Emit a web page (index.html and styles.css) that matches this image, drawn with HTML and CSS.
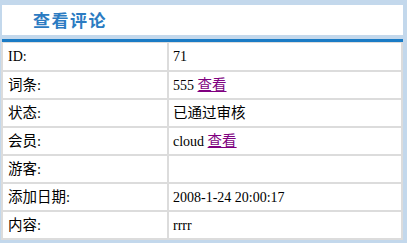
FILE: index.html
```html
<!DOCTYPE html>
<html>
<head>
<meta charset="utf-8">
<link rel="stylesheet" href="styles.css">
</head>
<body>
<div class="wrap">
  <div class="title">查看评论</div>
  <div class="bar"></div>
  <table class="info">
    <tr class="first"><td class="label"><span class="lat">ID:</span></td><td class="val"><span class="lat">71</span></td></tr>
    <tr><td class="label">词条:</td><td class="val"><span class="lat">555 </span><a href="#" class="link">查看</a></td></tr>
    <tr><td class="label">状态:</td><td class="val">已通过审核</td></tr>
    <tr><td class="label">会员:</td><td class="val"><span class="lat">cloud </span><a href="#" class="link">查看</a></td></tr>
    <tr><td class="label">游客:</td><td class="val"></td></tr>
    <tr><td class="label">添加日期:</td><td class="val"><span class="lat">2008-1-24 20:00:17</span></td></tr>
    <tr><td class="label">内容:</td><td class="val"><span class="lat">rrrr</span></td></tr>
  </table>
</div>
</body>
</html>
```
FILE: styles.css
```css
html, body {
  margin: 0;
  padding: 0;
  background: #c3d8ec;
}
.wrap {
  padding: 5px 4px 0 1px;
}
.title {
  margin-left: 1px;
  height: 30px;
  background: #fff;
  padding-left: 31px;
  font-family: "Noto Sans CJK SC", sans-serif;
  font-weight: bold;
  font-size: 17px;
  line-height: 30px;
  color: #2b7bc2;
  letter-spacing: 1.5px;
  margin-bottom: 4px;
}
.bar {
  margin-left: 1px;
  height: 3px;
  background: #1a7bc5;
}
.info {
  width: 402px;
  border-collapse: separate;
  border-spacing: 0;
  background: #fff;
  border-top: 1px solid #dcdcdc;
  border-left: 2px solid #dcdcdc;
  border-right: 2px solid #dcdcdc;
  font-family: "Liberation Serif", "Noto Sans CJK SC", serif;
  font-size: 14.5px;
  color: #000;
}
.info td {
  height: 26px;
  padding: 0;
  border-bottom: 2px solid #dcdcdc;
  vertical-align: middle;
  line-height: 16px;
}
.info .first td {
  height: 27px;
}
.info td.label {
  width: 159px;
  padding-left: 5px;
  border-right: 2px solid #dcdcdc;
}
.info td.val {
  padding-left: 4px;
}
.lat {
  font-size: 14px;
}
.link {
  color: #800080;
  text-decoration: underline;
}
```
